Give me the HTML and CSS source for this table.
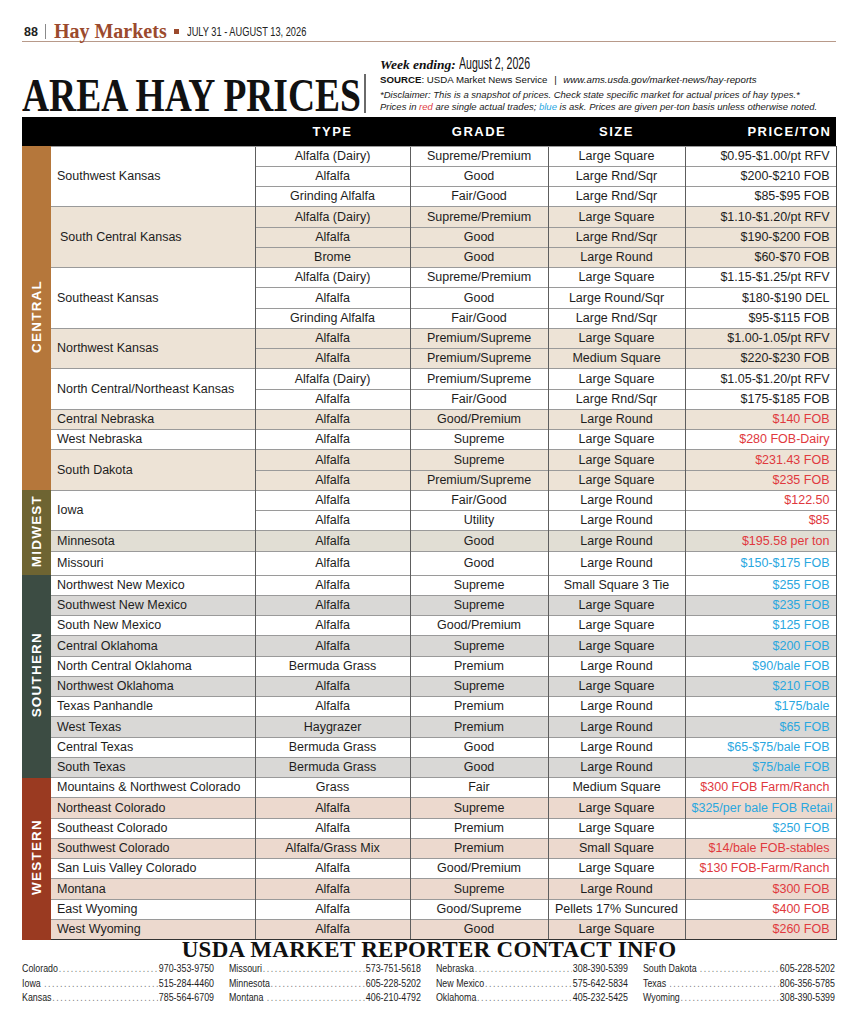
FILE: index.html
```html
<!DOCTYPE html>
<html lang="en">
<head>
<meta charset="utf-8">
<title>Area Hay Prices</title>
<link rel="stylesheet" href="styles.css">
</head>
<body>
<div class="page">
  <header class="masthead">
    <span class="pg">88</span>
    <span class="rule"></span>
    <span class="sect">Hay Markets</span>
    <span class="sq"></span>
    <span class="dates">JULY 31 - AUGUST 13, 2026</span>
  </header>

  <div class="titlebar">
    <div class="title-wrap"><h1>AREA HAY PRICES</h1></div>
    <div class="vbar"></div>
    <div class="info">
      <div class="week"><em>Week ending:</em><span class="date">August 2, 2026</span></div>
      <div class="source"><b>SOURCE</b>: USDA Market News Service <span class="pipe">|</span> <i>www.ams.usda.gov/market-news/hay-reports</i></div>
      <div class="disc">
        <div>*Disclaimer: This is a snapshot of prices. Check state specific market for actual prices of hay types.*</div>
        <div>Prices in <span class="red">red</span> are single actual trades; <span class="blue">blue</span> is ask. Prices are given per-ton basis unless otherwise noted.</div>
      </div>
    </div>
  </div>

  <table class="prices">
    <colgroup>
      <col class="c-band"><col class="c-loc"><col class="c-type"><col class="c-grade"><col class="c-size"><col class="c-price">
    </colgroup>
    <thead>
      <tr><th></th><th></th><th>TYPE</th><th>GRADE</th><th>SIZE</th><th class="p">PRICE/TON</th></tr>
    </thead>
    <tbody>
      <tr class="w"><td class="band central" rowspan="17"><span>CENTRAL</span></td><td class="loc" rowspan="3">Southwest Kansas</td><td>Alfalfa (Dairy)</td><td>Supreme/Premium</td><td>Large Square</td><td class="p">$0.95-$1.00/pt RFV</td></tr>
      <tr class="w"><td>Alfalfa</td><td>Good</td><td>Large Rnd/Sqr</td><td class="p">$200-$210 FOB</td></tr>
      <tr class="w"><td>Grinding Alfalfa</td><td>Fair/Good</td><td>Large Rnd/Sqr</td><td class="p">$85-$95 FOB</td></tr>

      <tr class="b"><td class="loc ind" rowspan="3">South Central Kansas</td><td>Alfalfa (Dairy)</td><td>Supreme/Premium</td><td>Large Square</td><td class="p">$1.10-$1.20/pt RFV</td></tr>
      <tr class="b"><td>Alfalfa</td><td>Good</td><td>Large Rnd/Sqr</td><td class="p">$190-$200 FOB</td></tr>
      <tr class="b"><td>Brome</td><td>Good</td><td>Large Round</td><td class="p">$60-$70 FOB</td></tr>

      <tr class="w"><td class="loc" rowspan="3">Southeast Kansas</td><td>Alfalfa (Dairy)</td><td>Supreme/Premium</td><td>Large Square</td><td class="p">$1.15-$1.25/pt RFV</td></tr>
      <tr class="w"><td>Alfalfa</td><td>Good</td><td>Large Round/Sqr</td><td class="p">$180-$190 DEL</td></tr>
      <tr class="w"><td>Grinding Alfalfa</td><td>Fair/Good</td><td>Large Rnd/Sqr</td><td class="p">$95-$115 FOB</td></tr>

      <tr class="b"><td class="loc" rowspan="2">Northwest Kansas</td><td>Alfalfa</td><td>Premium/Supreme</td><td>Large Square</td><td class="p">$1.00-1.05/pt RFV</td></tr>
      <tr class="b"><td>Alfalfa</td><td>Premium/Supreme</td><td>Medium Square</td><td class="p">$220-$230 FOB</td></tr>

      <tr class="w"><td class="loc" rowspan="2">North Central/Northeast Kansas</td><td>Alfalfa (Dairy)</td><td>Premium/Supreme</td><td>Large Square</td><td class="p">$1.05-$1.20/pt RFV</td></tr>
      <tr class="w"><td>Alfalfa</td><td>Fair/Good</td><td>Large Rnd/Sqr</td><td class="p">$175-$185 FOB</td></tr>

      <tr class="b"><td class="loc">Central Nebraska</td><td>Alfalfa</td><td>Good/Premium</td><td>Large Round</td><td class="p red">$140 FOB</td></tr>
      <tr class="w"><td class="loc">West Nebraska</td><td>Alfalfa</td><td>Supreme</td><td>Large Square</td><td class="p red">$280 FOB-Dairy</td></tr>
      <tr class="b"><td class="loc" rowspan="2">South Dakota</td><td>Alfalfa</td><td>Supreme</td><td>Large Square</td><td class="p red">$231.43 FOB</td></tr>
      <tr class="b"><td>Alfalfa</td><td>Premium/Supreme</td><td>Large Square</td><td class="p red">$235 FOB</td></tr>

      <tr class="w"><td class="band midwest" rowspan="4"><span>MIDWEST</span></td><td class="loc" rowspan="2">Iowa</td><td>Alfalfa</td><td>Fair/Good</td><td>Large Round</td><td class="p red">$122.50</td></tr>
      <tr class="w"><td>Alfalfa</td><td>Utility</td><td>Large Round</td><td class="p red">$85</td></tr>
      <tr class="m"><td class="loc">Minnesota</td><td>Alfalfa</td><td>Good</td><td>Large Round</td><td class="p red">$195.58 per ton</td></tr>
      <tr class="w tall"><td class="loc">Missouri</td><td>Alfalfa</td><td>Good</td><td>Large Round</td><td class="p blue">$150-$175 FOB</td></tr>

      <tr class="w"><td class="band southern" rowspan="10"><span>SOUTHERN</span></td><td class="loc">Northwest New Mexico</td><td>Alfalfa</td><td>Supreme</td><td>Small Square 3 Tie</td><td class="p blue">$255 FOB</td></tr>
      <tr class="g"><td class="loc">Southwest New Mexico</td><td>Alfalfa</td><td>Supreme</td><td>Large Square</td><td class="p blue">$235 FOB</td></tr>
      <tr class="w"><td class="loc">South New Mexico</td><td>Alfalfa</td><td>Good/Premium</td><td>Large Square</td><td class="p blue">$125 FOB</td></tr>
      <tr class="g"><td class="loc">Central Oklahoma</td><td>Alfalfa</td><td>Supreme</td><td>Large Square</td><td class="p blue">$200 FOB</td></tr>
      <tr class="w"><td class="loc">North Central Oklahoma</td><td>Bermuda Grass</td><td>Premium</td><td>Large Round</td><td class="p blue">$90/bale FOB</td></tr>
      <tr class="g"><td class="loc">Northwest Oklahoma</td><td>Alfalfa</td><td>Supreme</td><td>Large Square</td><td class="p blue">$210 FOB</td></tr>
      <tr class="w"><td class="loc">Texas Panhandle</td><td>Alfalfa</td><td>Premium</td><td>Large Round</td><td class="p blue">$175/bale</td></tr>
      <tr class="g"><td class="loc">West Texas</td><td>Haygrazer</td><td>Premium</td><td>Large Round</td><td class="p blue">$65 FOB</td></tr>
      <tr class="w"><td class="loc">Central Texas</td><td>Bermuda Grass</td><td>Good</td><td>Large Round</td><td class="p blue">$65-$75/bale FOB</td></tr>
      <tr class="g"><td class="loc">South Texas</td><td>Bermuda Grass</td><td>Good</td><td>Large Round</td><td class="p blue">$75/bale FOB</td></tr>

      <tr class="w"><td class="band western" rowspan="8"><span>WESTERN</span></td><td class="loc">Mountains &amp; Northwest Colorado</td><td>Grass</td><td>Fair</td><td>Medium Square</td><td class="p red">$300 FOB Farm/Ranch</td></tr>
      <tr class="k"><td class="loc">Northeast Colorado</td><td>Alfalfa</td><td>Supreme</td><td>Large Square</td><td class="p blue">$325/per bale FOB Retail</td></tr>
      <tr class="w"><td class="loc">Southeast Colorado</td><td>Alfalfa</td><td>Premium</td><td>Large Square</td><td class="p blue">$250 FOB</td></tr>
      <tr class="k"><td class="loc">Southwest Colorado</td><td>Alfalfa/Grass Mix</td><td>Premium</td><td>Small Square</td><td class="p red">$14/bale FOB-stables</td></tr>
      <tr class="w"><td class="loc">San Luis Valley Colorado</td><td>Alfalfa</td><td>Good/Premium</td><td>Large Square</td><td class="p red">$130 FOB-Farm/Ranch</td></tr>
      <tr class="k"><td class="loc">Montana</td><td>Alfalfa</td><td>Supreme</td><td>Large Round</td><td class="p red">$300 FOB</td></tr>
      <tr class="w"><td class="loc">East Wyoming</td><td>Alfalfa</td><td>Good/Supreme</td><td>Pellets 17% Suncured</td><td class="p red">$400 FOB</td></tr>
      <tr class="k"><td class="loc">West Wyoming</td><td>Alfalfa</td><td>Good</td><td>Large Square</td><td class="p red">$260 FOB</td></tr>
    </tbody>
  </table>

  <h2 class="contact-title">USDA MARKET REPORTER CONTACT INFO</h2>
  <div class="contacts">
    <div class="col">
      <div class="entry"><span class="nm">Colorado</span><span class="lead"></span><span class="num">970-353-9750</span></div>
      <div class="entry"><span class="nm">Iowa&nbsp;</span><span class="lead"></span><span class="num">515-284-4460</span></div>
      <div class="entry"><span class="nm">Kansas</span><span class="lead"></span><span class="num">785-564-6709</span></div>
    </div>
    <div class="col">
      <div class="entry"><span class="nm">Missouri</span><span class="lead"></span><span class="num">573-751-5618</span></div>
      <div class="entry"><span class="nm">Minnesota</span><span class="lead"></span><span class="num">605-228-5202</span></div>
      <div class="entry"><span class="nm">Montana&nbsp;</span><span class="lead"></span><span class="num">406-210-4792</span></div>
    </div>
    <div class="col">
      <div class="entry"><span class="nm">Nebraska</span><span class="lead"></span><span class="num">308-390-5399</span></div>
      <div class="entry"><span class="nm">New Mexico</span><span class="lead"></span><span class="num">575-642-5834</span></div>
      <div class="entry"><span class="nm">Oklahoma</span><span class="lead"></span><span class="num">405-232-5425</span></div>
    </div>
    <div class="col">
      <div class="entry"><span class="nm">South Dakota&nbsp;</span><span class="lead"></span><span class="num">605-228-5202</span></div>
      <div class="entry"><span class="nm">Texas&nbsp;</span><span class="lead"></span><span class="num">806-356-5785</span></div>
      <div class="entry"><span class="nm">Wyoming</span><span class="lead"></span><span class="num">308-390-5399</span></div>
    </div>
  </div>
</div>
</body>
</html>
```

FILE: styles.css
```css
* { box-sizing: border-box; }

body {
  margin: 0;
  background: #ffffff;
  color: #1d1d1d;
  font-family: "Liberation Sans", Arial, sans-serif;
}

.page {
  padding-left: 22px;
}

/* ---------- masthead ---------- */
.masthead {
  display: flex;
  align-items: center;
  width: 814px;
  height: 42px;
  padding-top: 22px;
  border-bottom: 1px solid #b89a8a;
}
.pg {
  font-weight: 700;
  font-size: 12.5px;
  margin-left: 2px;
  color: #222;
}
.rule {
  width: 1px;
  height: 15px;
  background: #8a8a8a;
  margin: 0 8px 0 7px;
}
.sect {
  font-family: "Liberation Serif", serif;
  font-weight: 700;
  font-size: 20px;
  color: #9b4a2d;
}
.sq {
  width: 5px;
  height: 5px;
  background: #9b4a2d;
  margin: 0 8px 0 7px;
}
.dates {
  display: inline-block;
  white-space: nowrap;
  font-size: 12.5px;
  color: #222;
  transform: scaleX(0.74);
  transform-origin: left center;
}

/* ---------- title bar ---------- */
.titlebar {
  display: flex;
  height: 75px;
}
.title-wrap {
  width: 342px;
  margin-top: 31px;
}
.title-wrap h1 {
  margin: 0;
  font-family: "Liberation Serif", serif;
  font-weight: 700;
  font-size: 46px;
  line-height: 46px;
  white-space: nowrap;
  color: #111;
  transform: scaleX(0.815);
  transform-origin: left top;
}
.vbar {
  width: 2px;
  height: 39px;
  margin-top: 32px;
  background: #6a6a6a;
}
.info {
  margin-left: 14px;
  padding-top: 13px;
  white-space: nowrap;
}
.week {
  display: flex;
  align-items: baseline;
  height: 18px;
  line-height: 18px;
}
.week em {
  font-family: "Liberation Serif", serif;
  font-style: italic;
  font-weight: 700;
  font-size: 13.5px;
  color: #111;
}
.week .date {
  display: inline-block;
  font-size: 16px;
  margin-left: 3px;
  transform: scaleX(0.66);
  transform-origin: left center;
  color: #111;
}
.source {
  font-size: 9.7px;
  line-height: 13px;
  color: #111;
}
.source .pipe {
  margin: 0 4px;
}
.disc {
  margin-top: 3px;
  font-style: italic;
  font-size: 9.5px;
  line-height: 11.5px;
  color: #222;
}
.red { color: #e0393e; }
.blue { color: #2aa7df; }

/* ---------- table ---------- */
.prices {
  width: 814px;
  border-collapse: collapse;
  table-layout: fixed;
  font-size: 12.5px;
}
.c-band { width: 29px; }
.c-loc { width: 204px; }
.c-type { width: 155px; }
.c-grade { width: 138px; }
.c-size { width: 137px; }
.c-price { width: 151px; }

.prices th {
  height: 29px;
  padding: 0 6px;
  background: #000;
  color: #fff;
  font-size: 13px;
  font-weight: 700;
  letter-spacing: 1.5px;
  text-align: center;
}
.prices th.p {
  text-align: right;
  padding-right: 4.5px;
}

.prices td {
  height: 20.25px;
  padding: 0 6px;
  border-top: 1px solid #9a9a9a;
  border-left: 1px solid #5e5e5e;
  text-align: center;
  vertical-align: middle;
  white-space: nowrap;
  line-height: 1;
  overflow: hidden;
}
.prices td.loc {
  text-align: left;
  border-left: none;
}
.prices td.ind { padding-left: 9px; }
.prices td.p {
  text-align: right;
  border-right: 1px solid #444;
}
.prices tr.tall td { height: 24px; }
.prices tbody tr:last-child td { border-bottom: 1px solid #333; }

.prices tr.w td { background: #ffffff; }
.prices tr.b td { background: #ede3d6; }
.prices tr.m td { background: #e1ded4; }
.prices tr.g td { background: #d9d8d6; }
.prices tr.k td { background: #ecd9ce; }

.prices td.band {
  padding: 0;
  border: none;
  text-align: center;
}
.prices td.band span {
  display: inline-block;
  writing-mode: vertical-rl;
  transform: rotate(180deg);
  color: #fff;
  font-size: 13.5px;
  font-weight: 700;
  letter-spacing: 1.2px;
}
.prices td.band.central { background: #b5773b; }
.prices td.band.midwest { background: #6e6432; }
.prices td.band.southern { background: #3c4c43; }
.prices td.band.western { background: #9a3a21; }

/* ---------- contacts ---------- */
.contact-title {
  margin: 0;
  width: 814px;
  text-align: center;
  font-family: "Liberation Serif", serif;
  font-weight: 700;
  font-size: 23px;
  line-height: 19px;
  letter-spacing: 0.3px;
  color: #111;
}
.contacts {
  display: grid;
  grid-template-columns: repeat(4, 249.35px);
  column-gap: 19.48px;
  width: 1055.85px;
  margin-top: 2px;
  font-size: 11.5px;
  line-height: 14.5px;
  color: #1d1d1d;
  transform: scaleX(0.77);
  transform-origin: left top;
}
.entry {
  display: flex;
}
.entry .nm,
.entry .num {
  white-space: nowrap;
}
.entry .lead {
  flex: 1;
  overflow: hidden;
  white-space: nowrap;
  color: #777;
  margin: 0 1px;
}
.entry .lead::before {
  content: "..........................................................................................";
  letter-spacing: 2px;
}
```
